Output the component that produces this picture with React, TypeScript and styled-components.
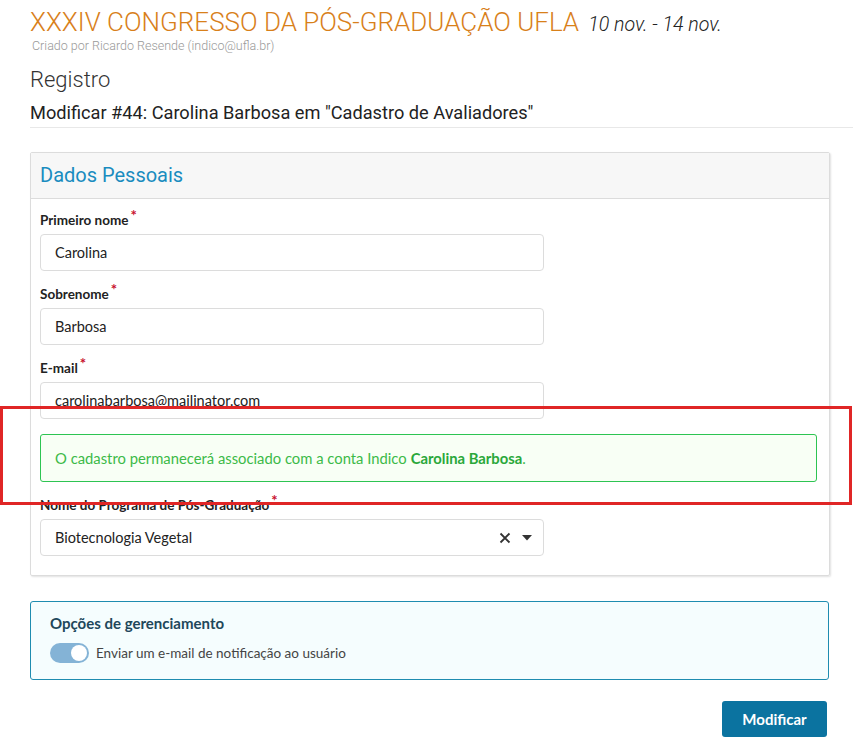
import styled, { createGlobalStyle } from 'styled-components';

const GlobalStyle = createGlobalStyle`
  html, body {
    margin: 0;
    padding: 0;
    background: #fff;
  }
  body {
    font-family: Lato, "Noto Sans", sans-serif;
    color: #333;
  }
  * { box-sizing: border-box; }
`;

export default function App() {
  return (
    <Page>
      <GlobalStyle />
      <EventHeader>
        <TitleRow>
          <EventTitle>XXXIV CONGRESSO DA PÓS-GRADUAÇÃO UFLA</EventTitle>
          <EventDates>10 nov. - 14 nov.</EventDates>
        </TitleRow>
        <CreatedBy>Criado por Ricardo Resende (indico@ufla.br)</CreatedBy>
      </EventHeader>

      <SectionTitle>Registro</SectionTitle>
      <PageTitle>Modificar #44: Carolina Barbosa em "Cadastro de Avaliadores"</PageTitle>

      <Main>
        <Card>
          <CardHeader>Dados Pessoais</CardHeader>
          <CardBody>
            <Field>
              <Label>Primeiro nome<Req>*</Req></Label>
              <Input defaultValue="Carolina" />
            </Field>
            <Field>
              <Label>Sobrenome<Req>*</Req></Label>
              <Input defaultValue="Barbosa" />
            </Field>
            <Field>
              <Label>E-mail<Req>*</Req></Label>
              <Input defaultValue="carolinabarbosa@mailinator.com" />
            </Field>
            <Alert>
              O cadastro permanecerá associado com a conta Indico <strong>Carolina Barbosa</strong>.
            </Alert>
            <Field>
              <Label>Nome do Programa de Pós-Graduação<Req>*</Req></Label>
              <Select>
                <span>Biotecnologia Vegetal</span>
                <SelectIcons>
                  <svg width="12" height="12" viewBox="0 0 12 12">
                    <path d="M1.5 1.5 L10.5 10.5 M10.5 1.5 L1.5 10.5" stroke="#333" strokeWidth="1.8" />
                  </svg>
                  <svg width="10" height="6" viewBox="0 0 10 6">
                    <path d="M0 0 H10 L5 5.5 Z" fill="#333" />
                  </svg>
                </SelectIcons>
              </Select>
            </Field>
          </CardBody>
        </Card>

        <Options>
          <OptionsTitle>Opções de gerenciamento</OptionsTitle>
          <ToggleRow>
            <Toggle><Knob /></Toggle>
            <span>Enviar um e-mail de notificação ao usuário</span>
          </ToggleRow>
        </Options>

        <Actions>
          <SubmitButton>Modificar</SubmitButton>
        </Actions>
      </Main>

      <Highlight />
    </Page>
  );
}

const Page = styled.div`
  position: relative;
  width: 853px;
  height: 755px;
  overflow: hidden;
`;

const EventHeader = styled.div`
  padding: 6px 0 0 30px;
`;

const TitleRow = styled.div`
  display: flex;
  align-items: baseline;
  gap: 9px;
  white-space: nowrap;
`;

const EventTitle = styled.h1`
  margin: 0;
  font-family: Roboto, sans-serif;
  font-weight: 300;
  font-size: 26px;
  line-height: 32px;
  color: #d8801a;
`;

const EventDates = styled.span`
  font-family: Roboto, sans-serif;
  font-weight: 300;
  font-style: italic;
  font-size: 19.6px;
  color: #222;
`;

const CreatedBy = styled.div`
  margin: 0 0 0 2px;
  font-family: Roboto, sans-serif;
  font-weight: 300;
  font-size: 12.5px;
  color: #999;
`;

const SectionTitle = styled.h2`
  margin: 14px 0 0 30px;
  font-family: Roboto, sans-serif;
  font-weight: 300;
  font-size: 22px;
  line-height: 26px;
  color: #333;
`;

const PageTitle = styled.h3`
  margin: 8px 0 0 30px;
  padding-bottom: 2px;
  font-family: Roboto, sans-serif;
  font-weight: 400;
  font-size: 18.2px;
  line-height: 24px;
  color: #222;
  border-bottom: 1px solid #e8e8e8;
`;

const Main = styled.div`
  padding: 24px 23px 0 30px;
`;

const Card = styled.section`
  border: 1px solid #dcdcdc;
  border-radius: 2px;
  box-shadow: 1px 1px 2px rgba(0, 0, 0, 0.12);
`;

const CardHeader = styled.div`
  height: 46px;
  padding: 10px 9px;
  background: #f7f7f7;
  border-bottom: 1px solid #dcdcdc;
  font-family: Roboto, sans-serif;
  font-size: 20px;
  line-height: 24px;
  color: #1a8cbf;
`;

const CardBody = styled.div`
  padding: 12px 9px 19px 9px;
  display: flex;
  flex-direction: column;
  gap: 14px;
`;

const Field = styled.div`
  display: flex;
  flex-direction: column;
  gap: 5px;
`;

const Label = styled.label`
  font-size: 13.5px;
  font-weight: 700;
  color: #222;
  line-height: 17px;
`;

const Req = styled.span`
  color: #c8102e;
  margin-left: 2px;
  font-size: 15px;
  position: relative;
  top: -4px;
`;

const Input = styled.input`
  width: 504px;
  height: 37px;
  padding: 0 14px;
  border: 1px solid #dcdcdc;
  border-radius: 4px;
  font-family: Lato, sans-serif;
  font-size: 14.5px;
  color: #222;
  outline: none;
`;

const Alert = styled.div`
  margin: 1px 3px 0 0;
  height: 48px;
  display: flex;
  align-items: center;
  padding: 0 14px;
  background: #f8fff5;
  border: 1px solid #2dc452;
  border-radius: 3px;
  font-size: 14.8px;
  color: #3cba48;

  strong {
    margin-left: 4px;
    font-weight: 700;
    color: #2aa83a;
  }
`;

const Select = styled.div`
  width: 504px;
  height: 37px;
  padding: 0 14px;
  display: flex;
  align-items: center;
  justify-content: space-between;
  border: 1px solid #dcdcdc;
  border-radius: 4px;
  font-size: 14.5px;
  color: #222;
`;

const SelectIcons = styled.div`
  display: flex;
  align-items: center;
  gap: 11px;
  margin-right: -3px;
`;

const Options = styled.section`
  margin: 25px 1px 0 0;
  height: 79px;
  padding: 11px 19px;
  background: #f5fdfe;
  border: 1px solid #1e8cb0;
  border-radius: 3px;
`;

const OptionsTitle = styled.div`
  font-size: 15px;
  font-weight: 700;
  color: #21475a;
  line-height: 20px;
`;

const ToggleRow = styled.div`
  margin-top: 10px;
  display: flex;
  align-items: center;
  gap: 7px;
  font-size: 13.5px;
  color: #444;
`;

const Toggle = styled.div`
  width: 39px;
  height: 20px;
  border-radius: 10px;
  background: #84b3d6;
  position: relative;
`;

const Knob = styled.div`
  position: absolute;
  top: 2px;
  right: 2px;
  width: 16px;
  height: 16px;
  border-radius: 50%;
  background: #fff;
`;

const Actions = styled.div`
  display: flex;
  justify-content: flex-end;
  margin-top: 21px;
  padding-right: 3px;
`;

const SubmitButton = styled.button`
  width: 105px;
  height: 36px;
  border: none;
  border-radius: 3px;
  background: #0b73a0;
  color: #fff;
  font-family: Lato, sans-serif;
  font-size: 15px;
  font-weight: 700;
`;

const Highlight = styled.div`
  position: absolute;
  left: 0;
  top: 406px;
  width: 852px;
  height: 99px;
  border: 3px solid #e02626;
  pointer-events: none;
`;
